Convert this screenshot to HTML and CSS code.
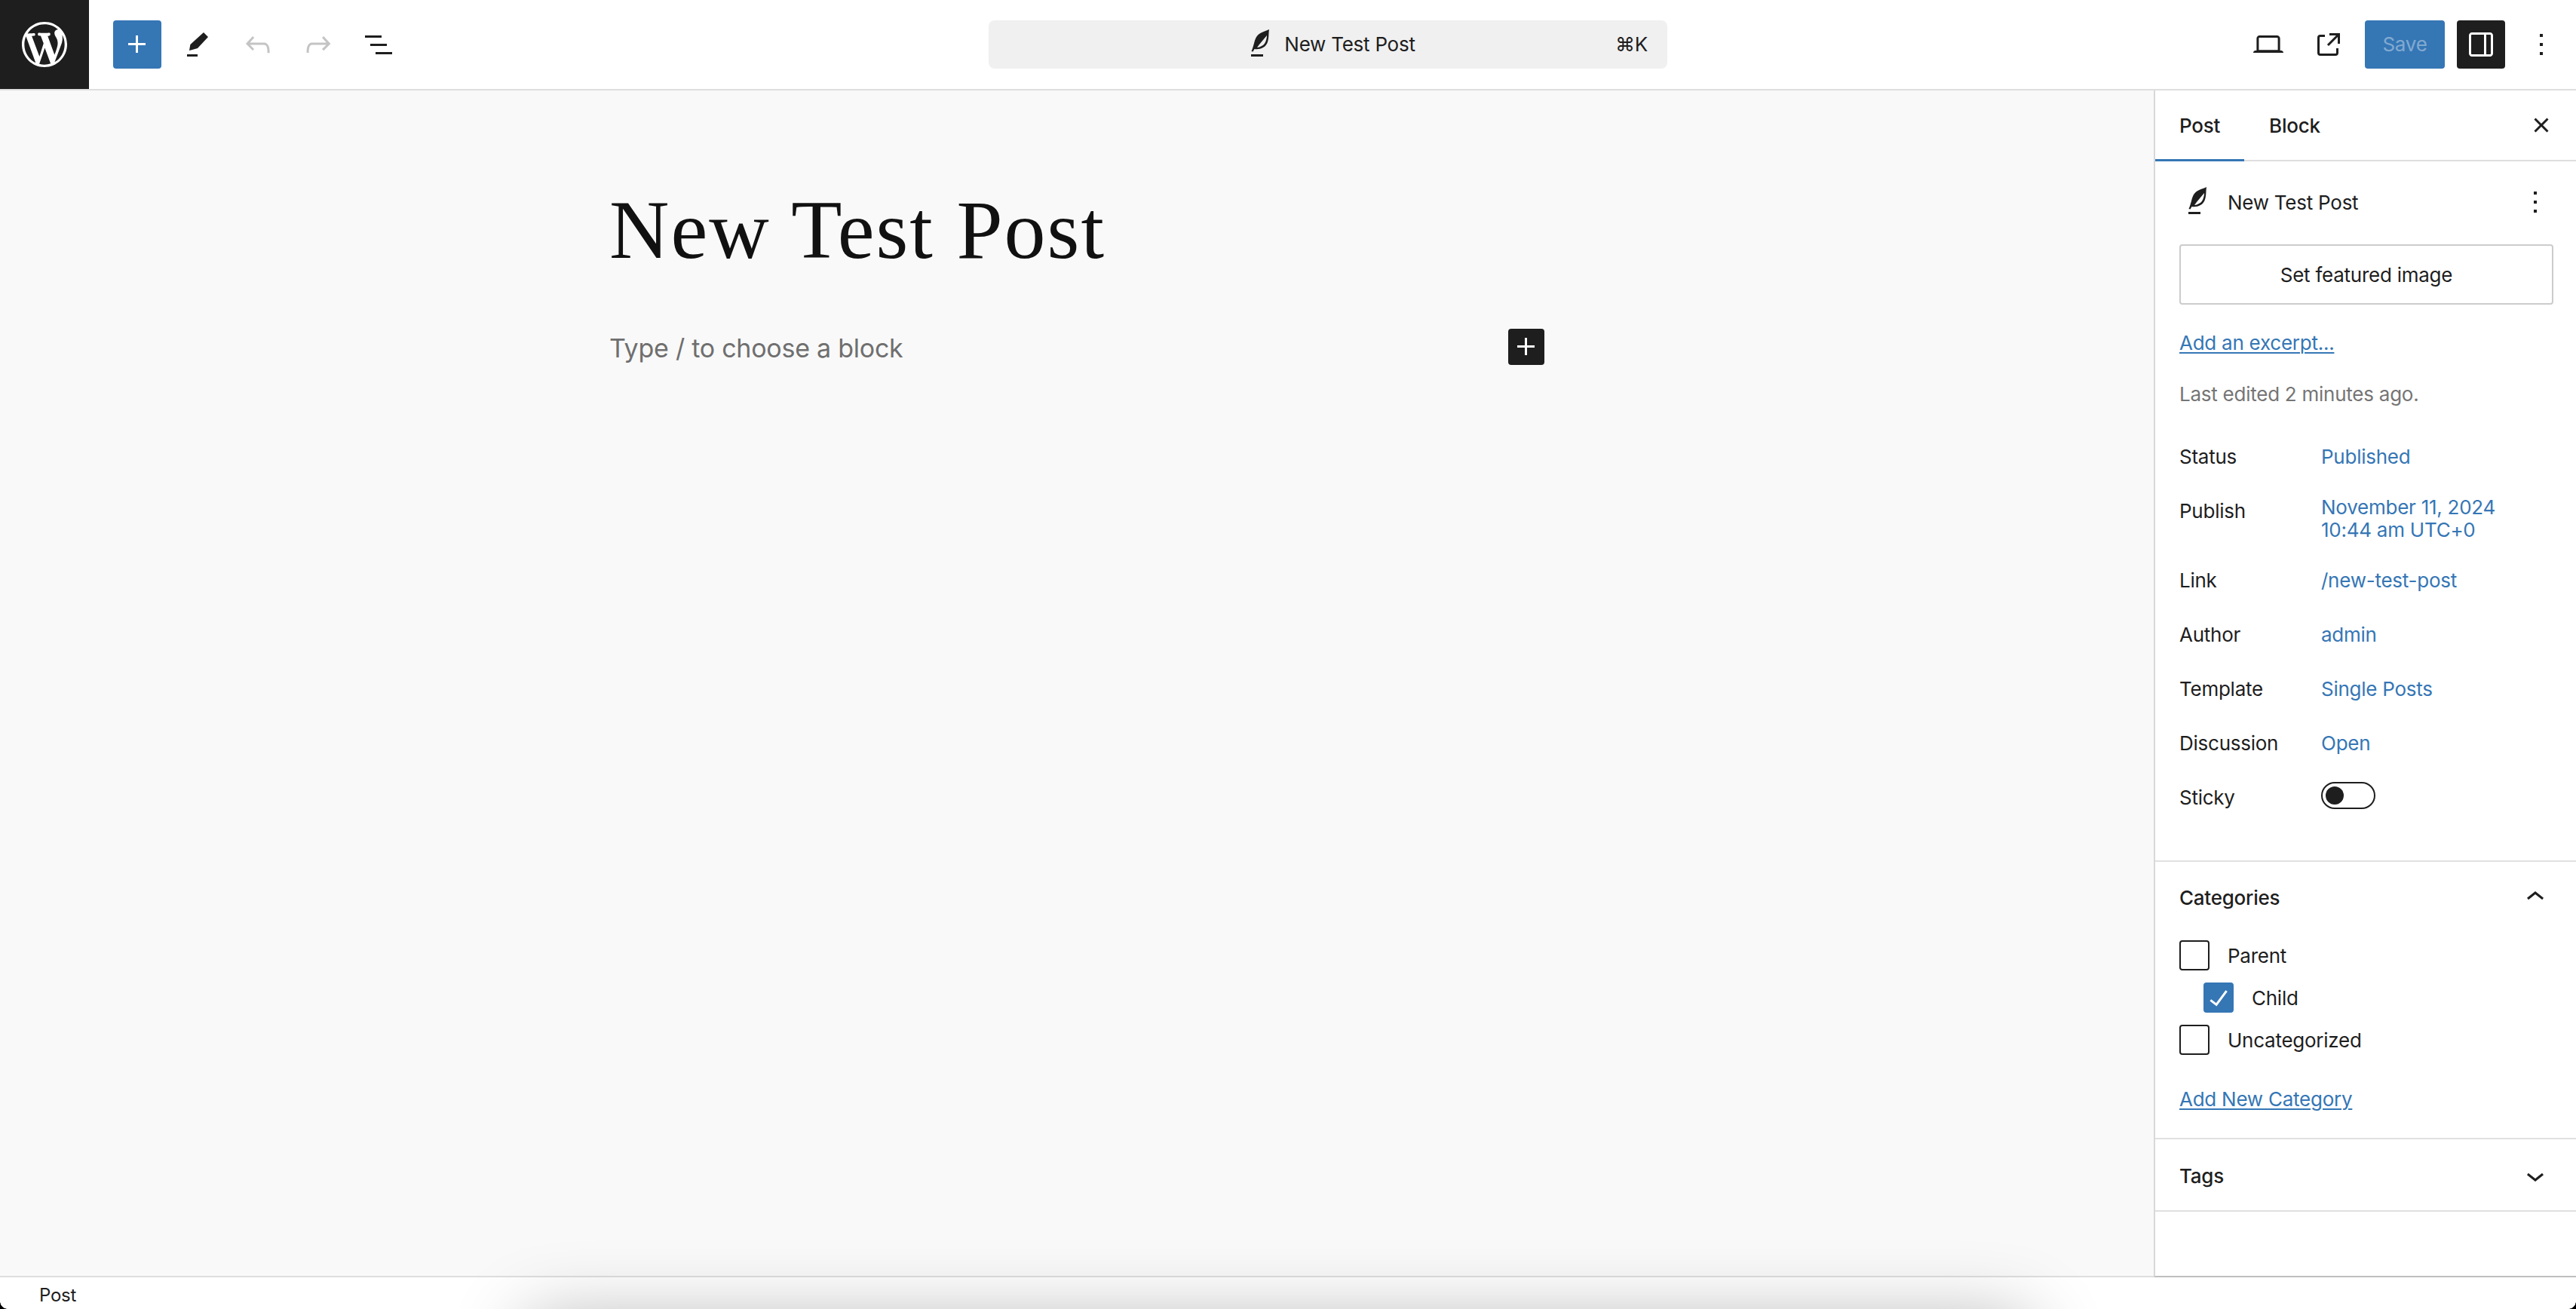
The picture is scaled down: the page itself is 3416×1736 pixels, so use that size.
FILE: index.html
```html
<!DOCTYPE html>
<html lang="en">
<head>
<meta charset="utf-8">
<title>Edit Post</title>
<link rel="stylesheet" href="styles.css">
</head>
<body>
<div class="app">
  <header class="topbar">
    <div class="left">
      <div class="logo">
        <svg class="logo-svg" viewBox="-2 -2 24 24"><path d="M20 10c0-5.51-4.49-10-10-10C4.48 0 0 4.49 0 10c0 5.52 4.48 10 10 10 5.51 0 10-4.48 10-10zM7.78 15.37L4.37 6.22c.55-.02 1.17-.08 1.17-.08.5-.06.44-1.13-.06-1.11 0 0-1.45.11-2.37.11-.18 0-.37 0-.58-.01C4.12 2.69 6.87 1.11 10 1.11c2.33 0 4.45.87 6.05 2.34-.68-.11-1.65.39-1.65 1.58 0 .74.45 1.36.9 2.1.35.61.55 1.36.55 2.46 0 1.49-1.4 5-1.4 5l-3.03-8.37c.54-.02.82-.17.82-.17.5-.05.44-1.25-.06-1.22 0 0-1.44.12-2.38.12-.87 0-2.33-.12-2.33-.12-.5-.03-.56 1.2-.06 1.22l.92.08 1.26 3.41zM17.41 10c.24-.64.74-1.87.43-4.25.7 1.29 1.05 2.71 1.05 4.25 0 3.29-1.73 6.24-4.4 7.78.97-2.59 1.94-5.2 2.92-7.78zM6.1 18.09C3.12 16.65 1.11 13.53 1.11 10c0-1.3.23-2.48.72-3.59C3.25 10.3 4.67 14.2 6.1 18.09zm4.03-6.63l2.58 6.98c-.86.29-1.76.45-2.71.45-.79 0-1.57-.11-2.29-.33.81-2.38 1.62-4.74 2.42-7.1z"/></svg>
      </div>
      <div class="tools">
        <div class="btn btn-blue"><svg class="ic" viewBox="0 0 24 24"><path d="M11 12.5V17.5H12.5V12.5H17.5V11H12.5V6H11V11H6V12.5H11Z"/></svg></div>
        <div class="btn"><svg class="ic" viewBox="0 0 24 24"><path d="M5 18.5h7V20H5zM7.2 12 16 4l3 3-7 7.5-5.5 1.5z"/></svg></div>
        <div class="btn btn-off"><svg class="ic" viewBox="0 0 24 24"><path d="M18.3 11.7c-.6-.6-1.4-.9-2.3-.9H6.7l2.9-3.3-1.1-1-4.5 5L8.5 16l1-1-2.7-2.7H16c.5 0 .9.2 1.3.5 1 1 1 3.4 1 4.5v.3h1.5v-.2c0-1.5 0-4.3-1.5-5.7z"/></svg></div>
        <div class="btn btn-off"><svg class="ic" viewBox="0 0 24 24"><path d="M15.6 6.5l-1.1 1 2.9 3.3H8c-.9 0-1.7.3-2.3.9-1.4 1.5-1.4 4.2-1.4 5.6v.2h1.5v-.3c0-1.1 0-3.5 1-4.5.3-.3.7-.5 1.3-.5h9.2L14.5 15l1.1 1.1 4.6-4.6-4.6-5z"/></svg></div>
        <div class="btn"><svg class="ic" viewBox="0 0 24 24"><path d="M3 6h11v1.5H3V6Zm3.5 5.5h11V13h-11v-1.5ZM21 17H10v1.5h11V17Z"/></svg></div>
      </div>
    </div>
    <div class="command">
      <div class="command-title">
        <svg class="ic" viewBox="0 0 48 48"><path fill-rule="evenodd" d="M34 4C28 7 20 8 16.5 15 14 20 14 25 10.500 33l2 .5 2-3.500C22 31 29 28 31.500 22 34 16 33 10 34 4ZM31 12C31 18 28 25 24 26 22 27 20 28 18 28 22 22 27 17 31 12Z"/><path d="M10 37h16v3H10z"/></svg>
        <span>New Test Post</span>
      </div>
      <span class="shortcut">⌘K</span>
    </div>
    <div class="right">
      <div class="btn"><svg class="ic" viewBox="0 0 24 24"><path d="M20.5 16h-.7V8c0-1.100-.9-2-2-2H6.200c-1.100 0-2 .9-2 2v8h-.7c-.8 0-1.500.7-1.500 1.500h20c0-.8-.7-1.500-1.500-1.500zM5.700 8c0-.3.2-.5.5-.5h11.600c.3 0 .5.2.5.5v7.600H5.700V8z"/></svg></div>
      <div class="btn"><svg class="ic" viewBox="0 0 24 24"><path d="M19.500 4.500h-7V6h4.440l-5.970 5.970 1.060 1.060L18 7.060v4.440h1.500v-7Zm-13 1a2 2 0 0 0-2 2v10a2 2 0 0 0 2 2h10a2 2 0 0 0 2-2v-3H17v3a.5.5 0 0 1-.5.5h-10a.5.5 0 0 1-.5-.5v-10a.5.5 0 0 1 .5-.5h3V5.500h-3Z"/></svg></div>
      <div class="save">Save</div>
      <div class="btn btn-dark"><svg class="ic" viewBox="0 0 24 24"><path d="M18 4H6c-1.100 0-2 .9-2 2v12c0 1.100.9 2 2 2h12c1.100 0 2-.9 2-2V6c0-1.100-.9-2-2-2zm-4 14.500H6c-.3 0-.5-.2-.5-.5V6c0-.3.2-.5.5-.5h8v13zm4.500-.5c0 .3-.2.5-.5.5h-2.500v-13H18c.3 0 .5.2.5.5v12z"/></svg></div>
      <div class="btn"><svg class="ic" viewBox="0 0 24 24"><path d="M13 19h-2v-2h2v2zm0-6h-2v-2h2v2zm0-6h-2V5h2v2z"/></svg></div>
    </div>
  </header>

  <main class="main">
    <section class="editor">
      <div class="canvas">
        <h1 class="post-title">New Test Post</h1>
        <div class="block-row">
          <p class="placeholder">Type / to choose a block</p>
          <div class="add-block"><svg class="ic" viewBox="0 0 24 24"><path d="M11 12.500V17.500H12.500V12.500H17.500V11H12.500V6H11V11H6V12.500H11Z"/></svg></div>
        </div>
      </div>
    </section>

    <aside class="sidebar">
      <div class="tabs">
        <div class="tab tab-active">Post</div>
        <div class="tab tab-block">Block</div>
        <svg class="ic tabs-close" viewBox="0 0 24 24"><path d="M12 13.060l3.712 3.713 1.061-1.060L13.061 12l3.712-3.712-1.060-1.060L12 10.938 8.288 7.227l-1.061 1.060L10.939 12l-3.712 3.712 1.060 1.061L12 13.061z"/></svg>
      </div>

      <div class="panel panel-post">
        <div class="summary">
          <svg class="ic summary-icon" viewBox="0 0 48 48"><path fill-rule="evenodd" d="M34 4C28 7 20 8 16.500 15 14 20 14 25 10.500 33l2 .5 2-3.500C22 31 29 28 31.500 22 34 16 33 10 34 4ZM31 12C31 18 28 25 24 26 22 27 20 28 18 28 22 22 27 17 31 12Z"/><path d="M10 37h16v3H10z"/></svg>
          <span class="summary-title">New Test Post</span>
          <svg class="ic" viewBox="0 0 24 24"><path d="M13 19h-2v-2h2v2zm0-6h-2v-2h2v2zm0-6h-2V5h2v2z"/></svg>
        </div>
        <div class="featured">Set featured image</div>
        <a class="link excerpt">Add an excerpt...</a>
        <p class="edited">Last edited 2 minutes ago.</p>
        <div class="rows">
          <div class="row"><span class="label">Status</span><span class="value">Published</span></div>
          <div class="row row-publish"><span class="label">Publish</span><span class="value value-multi">November 11, 2024<br>10:44 am UTC+0</span></div>
          <div class="row"><span class="label">Link</span><span class="value">/new-test-post</span></div>
          <div class="row"><span class="label">Author</span><span class="value">admin</span></div>
          <div class="row"><span class="label">Template</span><span class="value">Single Posts</span></div>
          <div class="row"><span class="label">Discussion</span><span class="value">Open</span></div>
          <div class="row"><span class="label">Sticky</span><span class="toggle"><span class="thumb"></span></span></div>
        </div>
      </div>

      <div class="panel panel-cats">
        <div class="panel-head">
          <span class="panel-title">Categories</span>
          <svg class="ic" viewBox="0 0 24 24"><path d="M6.500 12.400L12 8l5.500 4.400-.9 1.200L12 10l-4.500 3.600-1-1.200z"/></svg>
        </div>
        <div class="checks">
          <label class="check"><span class="box"></span>Parent</label>
          <label class="check check-child"><span class="box box-on"><svg class="ic" viewBox="0 0 24 24"><path d="M16.700 7.100l-6.300 8.500-3.300-2.500-.9 1.200 4.500 3.400L17.900 8z"/></svg></span>Child</label>
          <label class="check"><span class="box"></span>Uncategorized</label>
        </div>
        <a class="link add-cat">Add New Category</a>
      </div>

      <div class="panel panel-tags">
        <div class="panel-head">
          <span class="panel-title">Tags</span>
          <svg class="ic" viewBox="0 0 24 24"><path d="M17.500 11.600L12 16l-5.500-4.400.9-1.200L12 14l4.500-3.600 1 1.200z"/></svg>
        </div>
      </div>
    </aside>
  </main>

  <footer class="statusbar">Post</footer>

  <div class="drop-shadow"></div>
  <div class="corner corner-left"></div>
  <div class="corner corner-right"></div>
</div>
</body>
</html>
```
FILE: styles.css
```css
* { box-sizing: border-box; }
html, body { margin: 0; height: 100%; overflow: hidden; }
body {
  font-family: Inter, "Liberation Sans", sans-serif;
  font-size: 26px;
  line-height: 36px;
  letter-spacing: -0.25px;
  color: #1e1e1e;
  background: #fff;
}
p, h1 { margin: 0; }
.app { position: relative; display: flex; flex-direction: column; height: 1736px; overflow: hidden; }
.ic { display: block; width: 48px; height: 48px; fill: currentColor; flex: none; }

/* top bar */
.topbar {
  display: grid;
  grid-template-columns: 1311px 900px 1fr;
  align-items: center;
  height: 120px;
  border-bottom: 2px solid #dedede;
  background: #fff;
  flex: none;
}
.left { display: flex; align-items: center; height: 118px; }
.logo { width: 118px; height: 118px; background: #1e1e1e; display: flex; align-items: center; justify-content: center; }
.logo-svg { width: 72px; height: 72px; fill: #fff; display: block; }
.tools { display: flex; gap: 16px; margin-left: 32px; }
.btn { width: 64px; height: 64px; border-radius: 4px; display: flex; align-items: center; justify-content: center; color: #1e1e1e; flex: none; }
.btn-blue { background: #3576b5; color: #fff; }
.btn-off { color: #c4c4c4; }
.btn-dark { background: #1e1e1e; color: #fff; }
.command {
  position: relative;
  height: 64px;
  background: #f0f0f0;
  border-radius: 8px;
  display: flex;
  align-items: center;
  justify-content: center;
  padding-left: 4px;
}
.command-title { display: flex; align-items: center; gap: 6px; }
.shortcut { position: absolute; right: 26px; top: 14px; }
.right { display: flex; justify-content: flex-end; gap: 16px; padding-right: 14px; }
.save {
  width: 106px; height: 64px; border-radius: 4px; background: #3576b5;
  color: rgba(255,255,255,.4); display: flex; align-items: center; justify-content: center;
}

/* main */
.main { flex: 1; display: flex; min-height: 0; margin-bottom: -2px; position: relative; z-index: 1; }
.editor { flex: 1; background: #f9f9f9; border-bottom: 2px solid #dedede; }
.canvas { width: 1240px; margin: 0 auto; padding-top: 125px; }
.post-title {
  font-family: "Liberation Serif", serif;
  font-weight: 400;
  font-size: 110px;
  line-height: 120px;
  letter-spacing: 2px;
  color: #111;
}
.block-row { display: flex; justify-content: space-between; align-items: center; margin-top: 71px; }
.placeholder { font-size: 34px; color: #6f6f6f; padding-top: 3px; }
.add-block { width: 48px; height: 48px; background: #1e1e1e; color: #fff; border-radius: 4px; flex: none; }

/* sidebar */
.sidebar { width: 560px; flex: none; background: #fff; border-left: 2px solid #d8d8d8; border-bottom: 2px solid #bfbfbf; }
.tabs { position: relative; display: flex; height: 94px; box-shadow: inset 0 -2px 0 #dedede; }
.tab { display: flex; align-items: center; padding: 0 32px; font-weight: 500; height: 94px; }
.tab-block { padding-left: 33px; }
.tab-active { box-shadow: inset 0 -3px 0 #3576b5; }
.tabs-close { position: absolute; right: 22px; top: 22px; }
.panel { padding: 0 32px; border-bottom: 2px solid #e0e0e0; }
.panel-post { padding-top: 30px; padding-bottom: 65px; }
.summary { display: flex; align-items: center; height: 48px; margin-left: 2px; margin-right: -2px; }
.summary-icon { margin-right: 14px; }
.summary-title { flex: 1; padding-top: 1px; }
.featured {
  margin-top: 32px; width: 496px; height: 80px; border: 2px solid #ccc; border-radius: 4px;
  display: flex; align-items: center; justify-content: center; padding-top: 1px;
}
.link { display: block; color: #3576b5; text-decoration: underline; text-underline-offset: 3px; text-decoration-thickness: 2px; }
.excerpt { margin-top: 33px; }
.edited { margin-top: 32px; color: #757575; }
.rows { margin-top: 47px; display: flex; flex-direction: column; gap: 36px; }
.row { display: grid; grid-template-columns: 188px 1fr; height: 36px; }
.row-publish { height: 56px; }
.value { color: #3576b5; }
.value-multi { line-height: 30px; margin-top: -2px; }
.toggle { position: relative; display: block; width: 72px; height: 36px; border: 2px solid #1e1e1e; border-radius: 18px; margin-top: -3px; }
.thumb { position: absolute; left: 4px; top: 4px; width: 24px; height: 24px; border-radius: 50%; background: #1e1e1e; }
.panel-cats { padding-top: 23px; padding-bottom: 33px; }
.panel-head { display: flex; align-items: center; justify-content: space-between; height: 48px; font-weight: 500; }
.panel-title { padding-top: 1px; }
.panel-head .ic { margin-right: -2px; }
.checks { margin-top: 33px; display: flex; flex-direction: column; gap: 16px; }
.check { display: flex; align-items: center; gap: 24px; height: 40px; padding-top: 2px; }
.check-child { padding-left: 32px; }
.box { position: relative; width: 40px; height: 40px; border: 2px solid #1e1e1e; border-radius: 4px; flex: none; margin-top: -2px; }
.box-on { background: #3576b5; border-color: #3576b5; color: #fff; }
.box-on .ic { position: absolute; left: -6px; top: -6px; }
.add-cat { margin-top: 41px; }
.panel-tags { padding-top: 24px; padding-bottom: 22px; }

/* status bar */
.statusbar { flex: none; height: 44px; padding: 8px 0 0 52px; font-size: 24px; line-height: 36px; background: #fff; }

/* overlays */
.drop-shadow { position: absolute; z-index: 2; left: 700px; width: 1990px; top: 1750px; height: 200px; box-shadow: 0 0 100px rgba(0,0,0,.3); }
.corner { position: absolute; z-index: 3; bottom: 0; width: 10px; height: 10px; }
.corner-left { left: 0; background: radial-gradient(circle at 100% 0, transparent 9.500px, #000 10px); }
.corner-right { right: 0; background: radial-gradient(circle at 0 0, transparent 9.500px, #000 10px); }
```
